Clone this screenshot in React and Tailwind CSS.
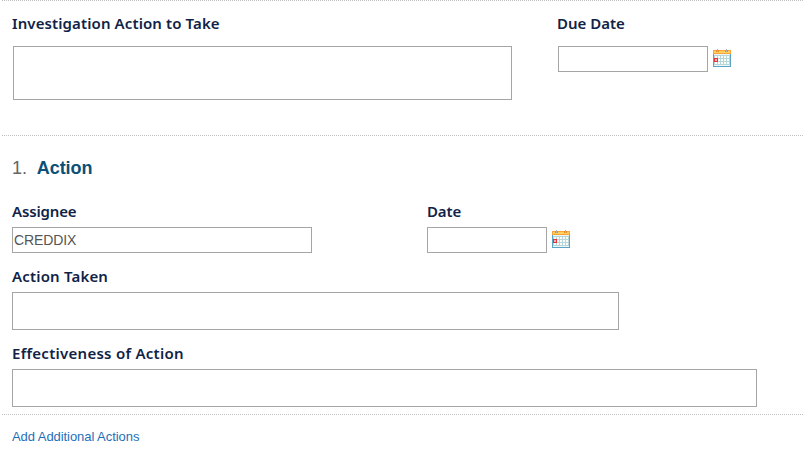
const COLUMNS = [2, 5, 8, 11, 14];
const ROWS = [7, 10, 13];

function CalendarIcon() {
  return (
    <svg width="18" height="18" viewBox="0 0 18 18" shapeRendering="crispEdges" className="mt-[3px] ml-[5px] shrink-0">
      <rect x="0" y="5" width="18" height="13" fill="#58a5c4" />
      <rect x="1" y="5" width="16" height="12" fill="#eff5f4" />
      <rect x="0" y="1" width="18" height="4" fill="#fba43c" />
      <rect x="1" y="2" width="16" height="2" fill="#ffd15c" />
      <rect x="1" y="6" width="16" height="10" fill="#b5d7dc" />
      {ROWS.map((y) =>
        COLUMNS.map((x) => <rect key={`${x}-${y}`} x={x} y={y} width="2" height="2" fill="#fbfcf6" />)
      )}
      <rect x="1" y="9" width="4" height="4" fill="#e8323c" />
      <rect x="2" y="10" width="2" height="2" fill="#f3b5b0" />
      <path d="M3 1h1v2h-1z M5 1h1v2h-1z M12 1h1v2h-1z M14 1h1v2h-1z" fill="#e78b32" />
      <path d="M4 0h1v3h-1z M13 0h1v3h-1z" fill="#b4b5b2" />
    </svg>
  );
}

function Label({ className, children }) {
  return (
    <div className={`h-5 whitespace-nowrap font-['Noto_Sans',sans-serif] text-[15px] leading-[18px] font-semibold text-[#102347] ${className}`}>
      {children}
    </div>
  );
}

function Field({ className, children }) {
  return (
    <div className={`shrink-0 border border-[#a5a5a5] bg-white pl-px text-[14px] leading-6 tracking-[-0.1px] text-[#555] ${className}`}>
      {children}
    </div>
  );
}

export default function App() {
  return (
    <div className="flex h-[452px] w-[804px] flex-col overflow-hidden bg-white pr-px pl-0.5 font-['Liberation_Sans',Arial,sans-serif]">
      <section className="flex h-[135px] border-t border-dotted border-[#bfbfbf] pt-[13px] pl-2.5">
        <div className="w-[545px]">
          <Label className="tracking-[0.11px]">Investigation Action to Take</Label>
          <Field className="mt-3 ml-px h-[54px] w-[499px]" />
        </div>
        <div>
          <Label className="tracking-[0px]">Due Date</Label>
          <div className="mt-3 ml-px flex">
            <Field className="h-[26px] w-[150px]" />
            <CalendarIcon />
          </div>
        </div>
      </section>

      <section className="h-[279px] border-t border-dotted border-[#bfbfbf] pt-5 pl-2.5">
        <h2 className="flex h-6 gap-[10px] text-[18px] leading-6 tracking-[-0.08px]">
          <span className="text-[#666]">1.</span>
          <span className="font-bold text-[#0b4f79]">Action</span>
        </h2>
        <div className="mt-[22px] flex">
          <div className="w-[415px]">
            <Label className="tracking-[-0.15px]">Assignee</Label>
            <Field className="mt-[5px] h-[26px] w-[300px]">CREDDIX</Field>
          </div>
          <div>
            <Label className="tracking-[-0.15px]">Date</Label>
            <div className="mt-[5px] flex">
              <Field className="h-[26px] w-[120px]" />
              <CalendarIcon />
            </div>
          </div>
        </div>
        <Label className="mt-[14px] tracking-[0.18px]">Action Taken</Label>
        <Field className="mt-[5px] h-[38px] w-[607px]" />
        <Label className="mt-[14px] tracking-[0.27px]">Effectiveness of Action</Label>
        <Field className="mt-[5px] h-[38px] w-[745px]" />
      </section>

      <section className="border-t border-dotted border-[#bfbfbf] pt-3 pl-2.5">
        <a href="#" className="block text-[13px] leading-5 tracking-[-0.06px] text-[#1f6fb8]">Add Additional Actions</a>
      </section>
    </div>
  );
}
